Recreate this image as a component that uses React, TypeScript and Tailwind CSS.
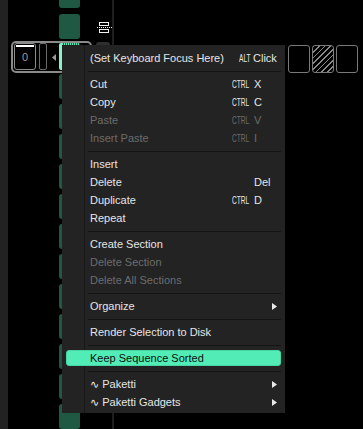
import React from "react";

type Item =
  | { sep: true }
  | {
      label: string;
      mod?: string;
      modW?: string;
      key?: string;
      keyCls?: string;
      disabled?: boolean;
      arrow?: boolean;
      active?: boolean;
    };

const items: Item[] = [
  { label: "(Set Keyboard Focus Here)", mod: "ALT", modW: "w-[12px]", key: "Click", keyCls: "ml-[7px]" },
  { sep: true },
  { label: "Cut", mod: "CTRL", modW: "w-[17px]", key: "X" },
  { label: "Copy", mod: "CTRL", modW: "w-[17px]", key: "C" },
  { label: "Paste", mod: "CTRL", modW: "w-[17px]", key: "V", disabled: true },
  { label: "Insert Paste", mod: "CTRL", modW: "w-[17px]", key: "I", disabled: true },
  { sep: true },
  { label: "Insert" },
  { label: "Delete", key: "Del", keyCls: "ml-[22px]" },
  { label: "Duplicate", mod: "CTRL", modW: "w-[17px]", key: "D" },
  { label: "Repeat" },
  { sep: true },
  { label: "Create Section" },
  { label: "Delete Section", disabled: true },
  { label: "Delete All Sections", disabled: true },
  { sep: true },
  { label: "Organize", arrow: true },
  { sep: true },
  { label: "Render Selection to Disk" },
  { sep: true },
  { label: "Keep Sequence Sorted", active: true },
  { sep: true },
  { label: "∿ Paketti", arrow: true },
  { label: "∿ Paketti Gadgets", arrow: true },
];

function Arrow() {
  return (
    <svg width="5" height="7" viewBox="0 0 5 7" className="ml-auto mr-[8px]">
      <polygon points="0,0 5,3.5 0,7" fill="#e8e8e8" />
    </svg>
  );
}

function Shortcut({ item }: { item: Exclude<Item, { sep: true }> }) {
  if (!item.key) return null;
  return (
    <span className={`flex items-center whitespace-nowrap ${item.keyCls ?? ""}`}>
      {item.mod && (
        <span className={`inline-block ${item.modW}`}>
          <span className="inline-block origin-left scale-x-[0.6]">{item.mod}</span>
        </span>
      )}
      <span className={item.mod === "CTRL" ? "ml-[5px]" : item.mod ? "ml-[2px]" : ""}>{item.key}</span>
    </span>
  );
}

function Menu() {
  return (
    <div className="absolute left-[62px] top-[45px] w-[223px] h-[368px] bg-[#232323] pt-[4px]">
      <div className="absolute left-[22px] top-0 bottom-0 w-px bg-[#181818]" />
      <div className="relative flex flex-col">
        {items.map((item, i) => {
          if ("sep" in item) {
            return (
              <div key={i} className="h-[8px] flex items-center pl-[26px] pr-[4px]">
                <div className="h-px w-full bg-[#141414]" />
              </div>
            );
          }
          if (item.active) {
            return (
              <div key={i} className="h-[18px] px-[4px] py-px">
                <div className="h-[16px] rounded-[3px] bg-[#52ecb7] border border-[#46d6a4] flex items-center pl-[23px] text-[#0e0e0e]">
                  {item.label}
                </div>
              </div>
            );
          }
          return (
            <div
              key={i}
              className={`h-[18px] flex items-center pl-[28px] ${item.disabled ? "text-[#6c6c6c]" : "text-[#e6e6e6]"}`}
            >
              <span className="w-[142px] shrink-0 whitespace-nowrap">{item.label}</span>
              <Shortcut item={item} />
              {item.arrow && <Arrow />}
            </div>
          );
        })}
      </div>
    </div>
  );
}

function Block({ h = "h-[25px]", round = "rounded-[3px]" }: { h?: string; round?: string }) {
  return <div className={`w-[21px] ${h} ${round} bg-[#1f5943] shrink-0`} />;
}

function SplitIcon() {
  return (
    <svg width="16" height="12" viewBox="0 0 16 12" className="ml-[17px] mt-[8px] shrink-0">
      <rect x="2.5" y="0.5" width="9" height="3" fill="none" stroke="#f0f0f0" />
      <rect x="2.5" y="7.5" width="9" height="3" fill="none" stroke="#f0f0f0" />
      <line x1="0" y1="5.5" x2="15" y2="5.5" stroke="#f0f0f0" strokeDasharray="1 1" />
    </svg>
  );
}

export default function App() {
  return (
    <div className="relative w-[363px] h-[429px] bg-black flex overflow-hidden font-['Liberation_Sans','DejaVu_Sans',sans-serif] text-[11px] leading-[18px]">
      <div className="w-[8px] shrink-0 bg-[#222222]" />

      <div className="w-[104px] shrink-0 flex flex-col">
        <div className="h-[14px] shrink-0 pl-[51px]">
          <Block h="h-[8px]" round="rounded-b-[3px]" />
        </div>
        <div className="h-[27px] shrink-0 flex pl-[51px]">
          <Block />
          <SplitIcon />
        </div>
        <div className="h-[32px] shrink-0 flex pl-[3px]">
          <div className="w-[81px] h-[32px] shrink-0 border-2 border-[#8a8a8a] rounded-[5px] flex items-start">
            <div className="ml-px w-[22px] h-[27px] border border-[#8c8c8c] rounded-[3px] flex flex-col items-center">
              <div className="mt-px w-[18px] h-[2px] bg-white" />
              <span className="mt-[1px] text-[#9c9c9c] text-[11px] leading-[18px]">0</span>
            </div>
            <div className="ml-[3px] w-[8px] h-[27px] border border-[#6a6a6a] rounded-[2px]" />
            <svg width="4" height="7" viewBox="0 0 4 7" className="ml-[5px] self-center">
              <polygon points="4,0 0,3.5 4,7" fill="#9c9c9c" />
            </svg>
            <div className="ml-[3px] w-[21px] h-[27px] bg-[#1d4f3c] border-l-[3px] border-[#8ef0c9] rounded-[2px] overflow-hidden">
              <div className="h-[2px] w-full bg-[repeating-linear-gradient(90deg,#52ecb7_0px,#52ecb7_1px,transparent_1px,transparent_2px)]" />
            </div>
          </div>
          <div className="ml-[4px] mt-px w-[14px] h-[8px] rounded-t-[3px] bg-[#2e2e2e]" />
        </div>
        {Array.from({ length: 12 }).map((_, i) => (
          <div key={i} className="h-[30px] shrink-0 pl-[51px] pt-px">
            <Block />
          </div>
        ))}
      </div>

      <div className="w-[2px] shrink-0 bg-[#1e1e1e]" />

      <div className="flex-1 flex flex-col items-end pt-[45px] pr-[5px]">
        <div className="flex gap-[2px]">
          <div className="w-[22px] h-[28px] border border-[#7a7a7a] rounded-[3px]" />
          <div className="w-[22px] h-[28px] border border-[#7a7a7a] rounded-[3px] bg-[repeating-linear-gradient(135deg,#8a8a8a_0px,#8a8a8a_1px,transparent_1px,transparent_4px)]" />
          <div className="w-[22px] h-[28px] border border-[#7a7a7a] rounded-[3px]" />
        </div>
      </div>

      <Menu />
    </div>
  );
}
